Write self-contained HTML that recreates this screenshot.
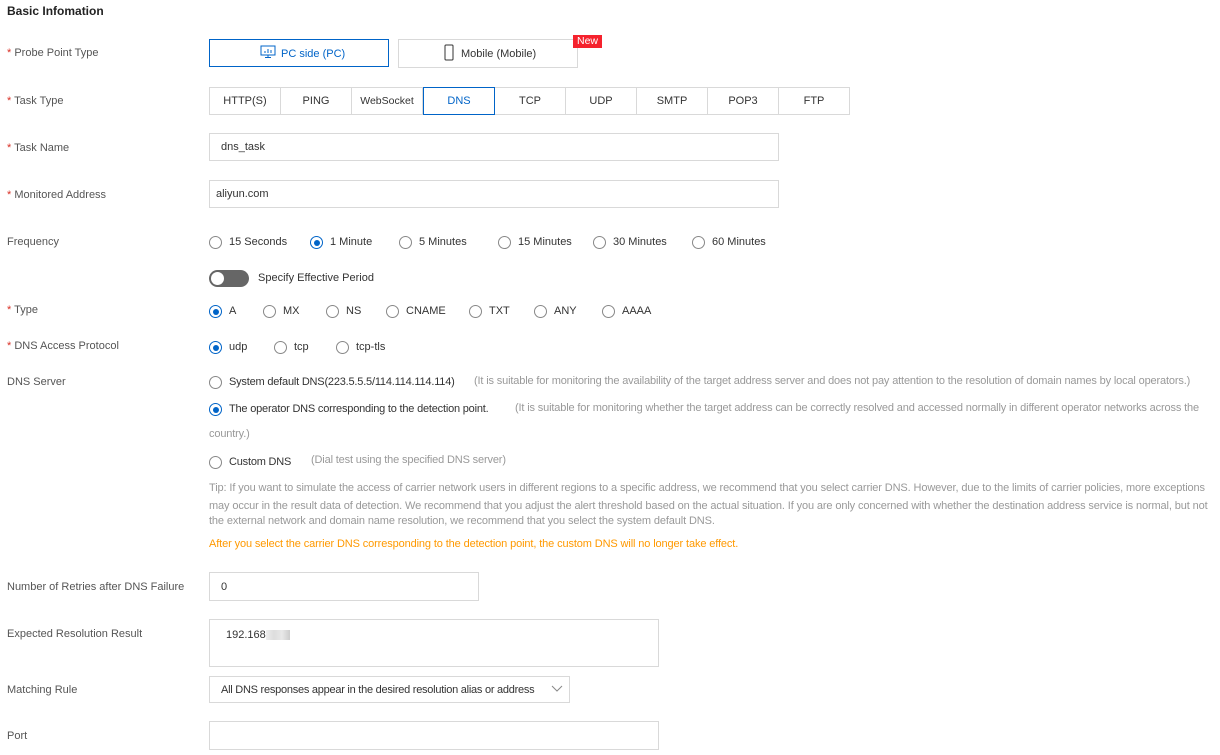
<!DOCTYPE html>
<html><head><meta charset="utf-8"><style>
*{box-sizing:border-box;margin:0;padding:0}
body{width:1220px;height:755px;background:#fff;font-family:"Liberation Sans",sans-serif;font-size:11px;color:#333;position:relative;overflow:hidden}
.a{position:absolute;white-space:nowrap;line-height:14px}
.lbl{left:7px;color:#555}
.req:before{content:"* ";color:#d93026}
.box{position:absolute;border:1px solid #d9d9d9;background:#fff}
.inp{position:absolute;border:1px solid #d9d9d9;padding-left:11px;line-height:26px;font-size:11px;color:#333}
.tab{position:absolute;top:87px;height:28px;border:1px solid #d9d9d9;text-align:center;line-height:26px;width:72px}
.r{position:absolute;width:13px;height:13px;border:1px solid #888;border-radius:50%;background:#fff}
.r.on{border-color:#0064c8}
.r.on:after{content:"";position:absolute;left:2.5px;top:2.5px;width:6px;height:6px;border-radius:50%;background:#0064c8}
.g{color:#999;letter-spacing:-0.15px}
.tip{color:#999;letter-spacing:-0.12px;left:209px}
</style></head><body>
<div class="a" style="left:7px;top:4px;font-weight:bold;font-size:12px;color:#222">Basic Infomation</div>

<div class="a lbl req" style="top:46px">Probe Point Type</div>
<div class="box" style="left:209px;top:39px;width:180px;height:28px;border-color:#0064c8"></div>
<svg class="a" style="left:260px;top:45px" width="16" height="14" viewBox="0 0 16 14"><rect x="1" y="1" width="14" height="9" fill="none" stroke="#0064c8"/><path d="M5 8V6M8 8V4M11 8V5M5 12.5h6M8 10v2.5" stroke="#0064c8"/></svg>
<div class="a" style="left:281px;top:47px;color:#0064c8">PC side (PC)</div>
<div class="box" style="left:398px;top:39px;width:180px;height:29px"></div>
<svg class="a" style="left:444px;top:44px" width="10" height="17"><rect x="1" y="1" width="8" height="15" rx="1" fill="none" stroke="#333"/></svg>
<div class="a" style="left:461px;top:47px">Mobile (Mobile)</div>
<div class="a" style="left:573px;top:35px;width:29px;height:13px;background:#f5222d;color:#fff;text-align:center;line-height:13px;font-size:10.5px">New</div>

<div class="a lbl req" style="top:94px">Task Type</div>
<div class="tab" style="left:209px">HTTP(S)</div>
<div class="tab" style="left:280px">PING</div>
<div class="tab" style="left:351px;font-size:10.5px">WebSocket</div>
<div class="tab" style="left:565px">UDP</div>
<div class="tab" style="left:636px">SMTP</div>
<div class="tab" style="left:707px">POP3</div>
<div class="tab" style="left:778px">FTP</div>
<div class="tab" style="left:494px">TCP</div>
<div class="tab" style="left:423px;border-color:#0064c8;color:#0064c8">DNS</div>

<div class="a lbl req" style="top:141px">Task Name</div>
<div class="inp" style="left:209px;top:133px;width:570px;height:28px;line-height:27px">dns_task</div>
<div class="a lbl req" style="top:188px">Monitored Address</div>
<div class="inp" style="left:209px;top:180px;width:570px;height:28px;padding-left:6px;line-height:27px">aliyun.com</div>

<div class="a lbl" style="top:235px">Frequency</div>
<div class="r" style="left:209px;top:236px"></div><div class="a" style="left:229px;top:235px">15 Seconds</div>
<div class="r on" style="left:310px;top:236px"></div><div class="a" style="left:330px;top:235px">1 Minute</div>
<div class="r" style="left:399px;top:236px"></div><div class="a" style="left:419px;top:235px">5 Minutes</div>
<div class="r" style="left:498px;top:236px"></div><div class="a" style="left:518px;top:235px">15 Minutes</div>
<div class="r" style="left:593px;top:236px"></div><div class="a" style="left:613px;top:235px">30 Minutes</div>
<div class="r" style="left:692px;top:236px"></div><div class="a" style="left:712px;top:235px">60 Minutes</div>

<div class="a" style="left:209px;top:270px;width:40px;height:17px;border-radius:9px;background:#666"></div>
<div class="a" style="left:211px;top:272px;width:13px;height:13px;border-radius:50%;background:#fff"></div>
<div class="a" style="left:258px;top:271px">Specify Effective Period</div>

<div class="a lbl req" style="top:303px">Type</div>
<div class="r on" style="left:209px;top:305px"></div><div class="a" style="left:229px;top:304px">A</div>
<div class="r" style="left:263px;top:305px"></div><div class="a" style="left:283px;top:304px">MX</div>
<div class="r" style="left:326px;top:305px"></div><div class="a" style="left:346px;top:304px">NS</div>
<div class="r" style="left:386px;top:305px"></div><div class="a" style="left:406px;top:304px">CNAME</div>
<div class="r" style="left:469px;top:305px"></div><div class="a" style="left:489px;top:304px">TXT</div>
<div class="r" style="left:534px;top:305px"></div><div class="a" style="left:554px;top:304px">ANY</div>
<div class="r" style="left:602px;top:305px"></div><div class="a" style="left:622px;top:304px">AAAA</div>

<div class="a lbl req" style="top:339px">DNS Access Protocol</div>
<div class="r on" style="left:209px;top:341px"></div><div class="a" style="left:229px;top:340px">udp</div>
<div class="r" style="left:274px;top:341px"></div><div class="a" style="left:294px;top:340px">tcp</div>
<div class="r" style="left:336px;top:341px"></div><div class="a" style="left:356px;top:340px">tcp-tls</div>

<div class="a lbl" style="top:375px">DNS Server</div>
<div class="r" style="left:209px;top:376px"></div><div class="a" style="left:229px;top:375px;letter-spacing:-0.2px">System default DNS(223.5.5.5/114.114.114.114)</div>
<div class="a g" style="left:474px;top:374px">(It is suitable for monitoring the availability of the target address server and does not pay attention to the resolution of domain names by local operators.)</div>
<div class="r on" style="left:209px;top:403px"></div><div class="a" style="left:229px;top:402px;letter-spacing:-0.2px">The operator DNS corresponding to the detection point.</div>
<div class="a g" style="left:515px;top:401px">(It is suitable for monitoring whether the target address can be correctly resolved and accessed normally in different operator networks across the</div>
<div class="a g" style="left:209px;top:427px">country.)</div>
<div class="r" style="left:209px;top:456px"></div><div class="a" style="left:229px;top:455px;letter-spacing:-0.2px">Custom DNS</div>
<div class="a g" style="left:311px;top:453px">(Dial test using the specified DNS server)</div>

<div class="a tip" style="top:481px">Tip: If you want to simulate the access of carrier network users in different regions to a specific address, we recommend that you select carrier DNS. However, due to the limits of carrier policies, more exceptions</div>
<div class="a tip" style="top:499px">may occur in the result data of detection. We recommend that you adjust the alert threshold based on the actual situation. If you are only concerned with whether the destination address service is normal, but not</div>
<div class="a tip" style="top:514px">the external network and domain name resolution, we recommend that you select the system default DNS.</div>
<div class="a tip" style="top:537px;color:#f90">After you select the carrier DNS corresponding to the detection point, the custom DNS will no longer take effect.</div>

<div class="a lbl" style="top:580px">Number of Retries after DNS Failure</div>
<div class="inp" style="left:209px;top:572px;width:270px;height:29px;line-height:28px">0</div>
<div class="a lbl" style="top:627px">Expected Resolution Result</div>
<div class="inp" style="left:209px;top:619px;width:450px;height:48px;padding-left:16px;line-height:30px">192.168<span style="display:inline-block;width:24px;height:10px;background:linear-gradient(90deg,#eee,#ddd,#e8e8e8,#ccc);vertical-align:middle"></span></div>
<div class="a lbl" style="top:683px">Matching Rule</div>
<div class="inp" style="left:209px;top:676px;width:361px;height:27px;padding-left:11px;line-height:27px;letter-spacing:-0.25px">All DNS responses appear in the desired resolution alias or address</div>
<svg class="a" style="left:551px;top:685px" width="12" height="8"><path d="M1 1l5 5 5-5" fill="none" stroke="#888"/></svg>
<div class="a lbl" style="top:729px">Port</div>
<div class="inp" style="left:209px;top:721px;width:450px;height:29px"></div>
</body></html>
